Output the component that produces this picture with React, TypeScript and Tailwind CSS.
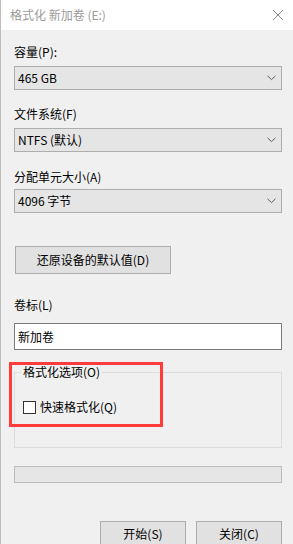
import { ChevronDown } from "lucide-react";

const font = { fontFamily: '"Noto Sans CJK SC", "Noto Sans", sans-serif' };

function Combo({ value }: { value: string }) {
  return (
    <div className="flex h-[24px] items-center justify-between border border-[#adadad] bg-[#e5e5e5] pl-[3px] pr-[5px]">
      <span>{value}</span>
      <svg width="9" height="6" viewBox="0 0 9 6" className="text-[#5f5f5f]">
        <path d="M0.5 0.8 L4.5 4.6 L8.5 0.8" fill="none" stroke="currentColor" strokeWidth="1" />
      </svg>
    </div>
  );
}

function Label({ children, className }: { children: string; className: string }) {
  return <div className={`h-[16px] leading-[16px] ${className}`}>{children}</div>;
}

export default function App() {
  return (
    <div
      className="relative h-[544px] w-[293px] overflow-hidden border-l border-[#bdbdbd] bg-[#f0f0f0] text-[12px] text-black"
      style={font}
    >
      <div className="flex h-[30px] items-center justify-between bg-white pl-[9px] pr-[10px] text-[#9a9a9a]">
        <span>格式化 新加卷 (E:)</span>
        <svg width="10" height="10" viewBox="0 0 10 10" className="text-[#8a8a8a]">
          <path d="M0 0 L10 10 M10 0 L0 10" stroke="currentColor" strokeWidth="1" />
        </svg>
      </div>

      <div className="flex flex-col pl-[13px] pr-[11px]">
        <Label className="mt-[14px]">容量(P):</Label>
        <div className="mt-[6px]">
          <Combo value="465 GB" />
        </div>

        <Label className="mt-[16px]">文件系统(F)</Label>
        <div className="mt-[6px]">
          <Combo value="NTFS (默认)" />
        </div>

        <Label className="mt-[17px]">分配单元大小(A)</Label>
        <div className="mt-[4px]">
          <Combo value="4096 字节" />
        </div>

        <button className="ml-[1px] mt-[33px] h-[28px] w-[156px] border border-[#adadad] bg-[#e1e1e1]">
          还原设备的默认值(D)
        </button>

        <Label className="mt-[23px]">卷标(L)</Label>
        <div className="mt-[10px] flex h-[27px] items-center border border-[#7a7a7a] bg-white pl-[3px]">
          新加卷
        </div>

        <fieldset className="mt-[14px] h-[84px] border border-[#dcdcdc] pl-[8px]">
          <legend className="-ml-[2px] px-[2px] leading-[16px]">格式化选项(O)</legend>
          <label className="mt-[19px] flex items-center gap-[4px]">
            <span className="h-[13px] w-[13px] border border-[#333333] bg-white" />
            <span className="leading-[16px]">快速格式化(Q)</span>
          </label>
        </fieldset>

        <div className="mt-[18px] h-[17px] border border-[#bcbcbc] bg-[#e6e6e6]" />

        <div className="mt-[38px] flex justify-end gap-[10px]">
          <button className="h-[26px] w-[86px] border border-[#adadad] bg-[#e1e1e1]">开始(S)</button>
          <button className="h-[26px] w-[86px] border border-[#adadad] bg-[#e1e1e1]">关闭(C)</button>
        </div>
      </div>

      <div className="pointer-events-none absolute left-[8px] top-[362px] h-[65px] w-[154px] border-[3px] border-[#ff3b3b]" />
    </div>
  );
}
